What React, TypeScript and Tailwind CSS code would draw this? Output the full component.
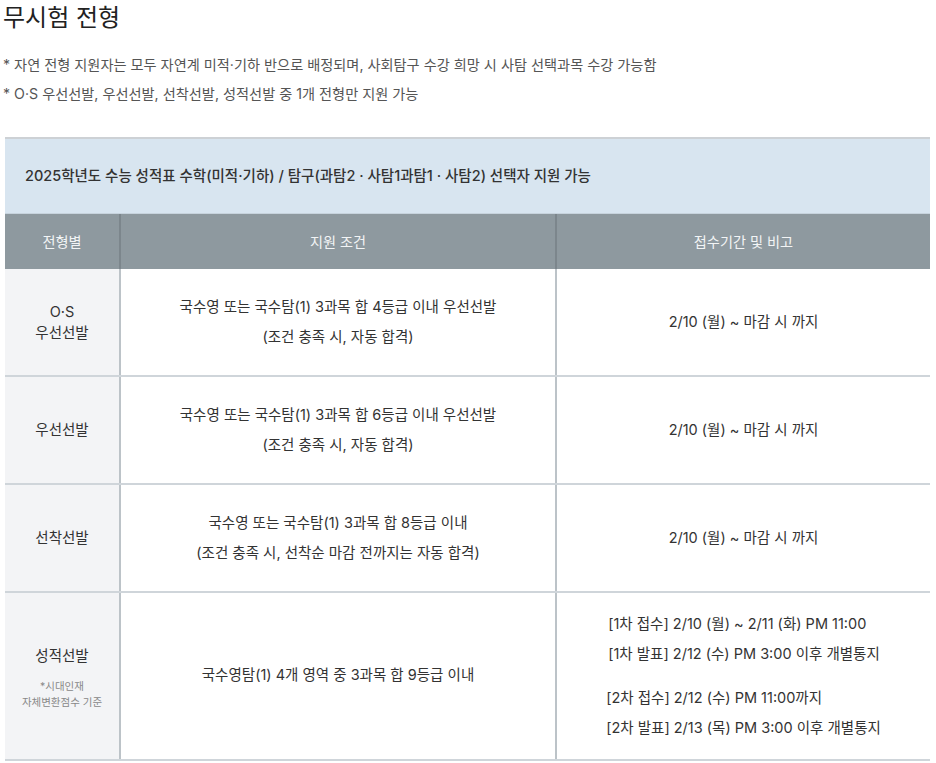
import React from "react";

const font = { fontFamily: 'Inter, "Noto Sans CJK KR", "Noto Sans", sans-serif' };

function Row({
  left,
  mid,
  right,
  h,
}: {
  left: React.ReactNode;
  mid: React.ReactNode;
  right: React.ReactNode;
  h: string;
}) {
  return (
    <div className={`grid grid-cols-[116px_436px_1fr] border-b-2 border-[#cfd5da] ${h}`}>
      <div className="flex flex-col items-center justify-center bg-[#f3f4f6] border-r-2 border-[#bcc3c8] text-center">
        {left}
      </div>
      <div className="flex flex-col items-center justify-center border-r-2 border-[#bcc3c8] text-center">
        {mid}
      </div>
      <div className="flex flex-col items-center justify-center text-center">{right}</div>
    </div>
  );
}

export default function App() {
  return (
    <div style={font} className="w-[936px] h-[763px] bg-white text-[#333] overflow-hidden">
      <h1 className="pl-[3px] pt-[2px] text-[24px] leading-[32px] font-normal text-[#222]">무시험 전형</h1>
      <div className="pl-[3px] mt-[16px] text-[14.2px] leading-[29px] text-[#555]">
        <p>* 자연 전형 지원자는 모두 자연계 미적·기하 반으로 배정되며, 사회탐구 수강 희망 시 사탐 선택과목 수강 가능함</p>
        <p>* O·S 우선선발, 우선선발, 선착선발, 성적선발 중 1개 전형만 지원 가능</p>
      </div>
      <div className="ml-[5px] mr-[6px] mt-[29px] border-t-2 border-[#cdd1d5]">
        <div className="h-[75px] bg-[#d8e5f0] border-b border-[#c7d3dd] flex items-center pl-[20px] text-[14.5px] font-medium text-[#333]">
          2025학년도 수능 성적표 수학(미적·기하) / 탐구(과탐2 · 사탐1과탐1 · 사탐2) 선택자 지원 가능
        </div>
        <div className="grid grid-cols-[116px_436px_1fr] h-[55px] bg-[#8e999f] text-[14.2px] text-[#f2f4f5]">
          <div className="flex items-center justify-center border-r-2 border-[#7c868c]">전형별</div>
          <div className="flex items-center justify-center border-r-2 border-[#7c868c]">지원 조건</div>
          <div className="flex items-center justify-center">접수기간 및 비고</div>
        </div>
        <div className="text-[14.5px] leading-[30px] text-[#333]">
          <Row
            h="h-[108px]"
            left={
              <div className="leading-[21px]">
                <p>O·S</p>
                <p>우선선발</p>
              </div>
            }
            mid={
              <>
                <p>국수영 또는 국수탐(1) 3과목 합 4등급 이내 우선선발</p>
                <p>(조건 충족 시, 자동 합격)</p>
              </>
            }
            right={<p>2/10 (월) ~ 마감 시 까지</p>}
          />
          <Row
            h="h-[108px]"
            left={<p>우선선발</p>}
            mid={
              <>
                <p>국수영 또는 국수탐(1) 3과목 합 6등급 이내 우선선발</p>
                <p>(조건 충족 시, 자동 합격)</p>
              </>
            }
            right={<p>2/10 (월) ~ 마감 시 까지</p>}
          />
          <Row
            h="h-[108px]"
            left={<p>선착선발</p>}
            mid={
              <>
                <p>국수영 또는 국수탐(1) 3과목 합 8등급 이내</p>
                <p>(조건 충족 시, 선착순 마감 전까지는 자동 합격)</p>
              </>
            }
            right={<p>2/10 (월) ~ 마감 시 까지</p>}
          />
          <Row
            h="h-[168px]"
            left={
              <>
                <p>성적선발</p>
                <p className="mt-[8px] text-[10.5px] leading-[16px] text-[#888]">
                  *시대인재
                  <br />
                  자체변환점수 기준
                </p>
              </>
            }
            mid={<p className="mb-[2px]">국수영탐(1) 4개 영역 중 3과목 합 9등급 이내</p>}
            right={
              <div className="text-left">
                <p className="pl-[2px]">[1차 접수] 2/10 (월) ~ 2/11 (화) PM 11:00</p>
                <p className="pl-[2px]">[1차 발표] 2/12 (수) PM 3:00 이후 개별통지</p>
                <p className="mt-[14px]">[2차 접수] 2/12 (수) PM 11:00까지</p>
                <p>[2차 발표] 2/13 (목) PM 3:00 이후 개별통지</p>
              </div>
            }
          />
        </div>
      </div>
    </div>
  );
}
